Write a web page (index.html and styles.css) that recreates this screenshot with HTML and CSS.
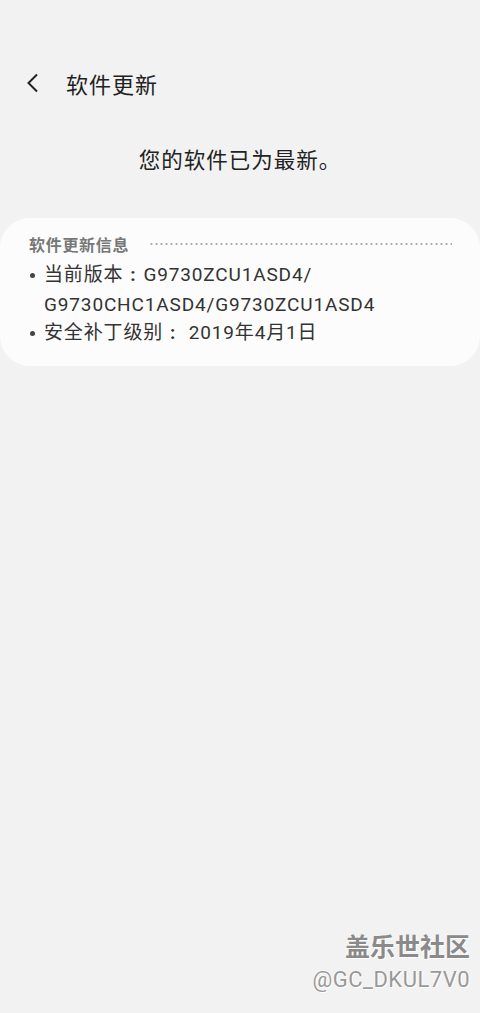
FILE: index.html
```html
<!DOCTYPE html>
<html lang="zh-CN">
<head>
  <meta charset="UTF-8">
  <meta name="viewport" content="width=device-width, initial-scale=1.0">
  <title>软件更新</title>
  <link rel="stylesheet" href="styles.css">
</head>
<body>
  <div class="header">
    <svg class="back" width="14" height="20" viewBox="0 0 14 20">
      <path d="M11 1.5 L2.5 10 L11 18.5" fill="none" stroke="#222" stroke-width="2"/>
    </svg>
    <span class="title">软件更新</span>
  </div>

  <p class="status">您的软件已为最新。</p>

  <div class="card">
    <div class="card-head">
      <span class="card-title">软件更新信息</span>
      <span class="dots"></span>
    </div>
    <ul class="info">
      <li>当前版本<span class="colon">:</span>G9730ZCU1ASD4/<br>G9730CHC1ASD4/G9730ZCU1ASD4</li>
      <li>安全补丁级别<span class="colon">:</span> 2019年4月1日</li>
    </ul>
  </div>

  <!-- 水印 -->
  <div class="watermark">
    <div class="wm-name">盖乐世社区</div>
    <div class="wm-id">@GC_DKUL7V0</div>
  </div>
</body>
</html>
```

FILE: styles.css
```css
* {
  font-family: 'Roboto', 'Noto Sans CJK SC', sans-serif;
  box-sizing: border-box;
}

body {
  margin: 0;
  background: #f2f2f2;
  color: #222;
  height: 1013px;
  position: relative;
  overflow: hidden;
}

.header {
  display: flex;
  align-items: center;
  height: 36px;
  margin-top: 65px;
  padding-left: 26px;
}

.back {
  display: block;
  margin-right: 26px;
}

.title {
  font-size: 22px;
  letter-spacing: 1px;
  color: #222;
}

.status {
  margin: 45px 0 0;
  text-align: center;
  font-size: 21.5px;
  line-height: 30px;
  letter-spacing: 1px;
  color: #222;
}

.card {
  margin: 42px 0 0;
  background: #fcfcfc;
  border-radius: 30px;
  padding: 14px 28px 16px 29px;
  height: 148px;
}

.card-head {
  display: flex;
  align-items: center;
  height: 24px;
}

.card-title {
  font-size: 16px;
  letter-spacing: 0.7px;
  font-weight: bold;
  color: #777;
}

.dots {
  flex: 1;
  margin-left: 20px;
  height: 2px;
  background-image: radial-gradient(circle, #aaa 1px, transparent 1.2px);
  background-size: 5px 2px;
  background-repeat: repeat-x;
}

.info {
  list-style: none;
  margin: 4px 0 0;
  padding: 0;
  font-size: 19px;
  line-height: 30px;
  letter-spacing: 0.85px;
  color: #333;
}

.info li {
  position: relative;
  padding-left: 15px;
}

.info li + li {
  margin-top: -2px;
}

.info li::before {
  content: '';
  position: absolute;
  left: 1px;
  top: 13px;
  width: 5px;
  height: 5px;
  border-radius: 50%;
  background: #444;
}

.colon {
  display: inline-block;
  width: 20px;
  text-align: center;
  font-weight: bold;
}

.watermark {
  position: absolute;
  right: 10px;
  bottom: 18px;
  text-align: right;
  color: #8a8a8a;
  text-shadow: 0 0 2px #fff, 1px 1px 0 #fff;
}

.wm-name {
  font-size: 25px;
  font-weight: bold;
  line-height: 34px;
}

.wm-id {
  font-size: 22px;
  line-height: 30px;
  letter-spacing: 0.5px;
  color: #999;
}
```
